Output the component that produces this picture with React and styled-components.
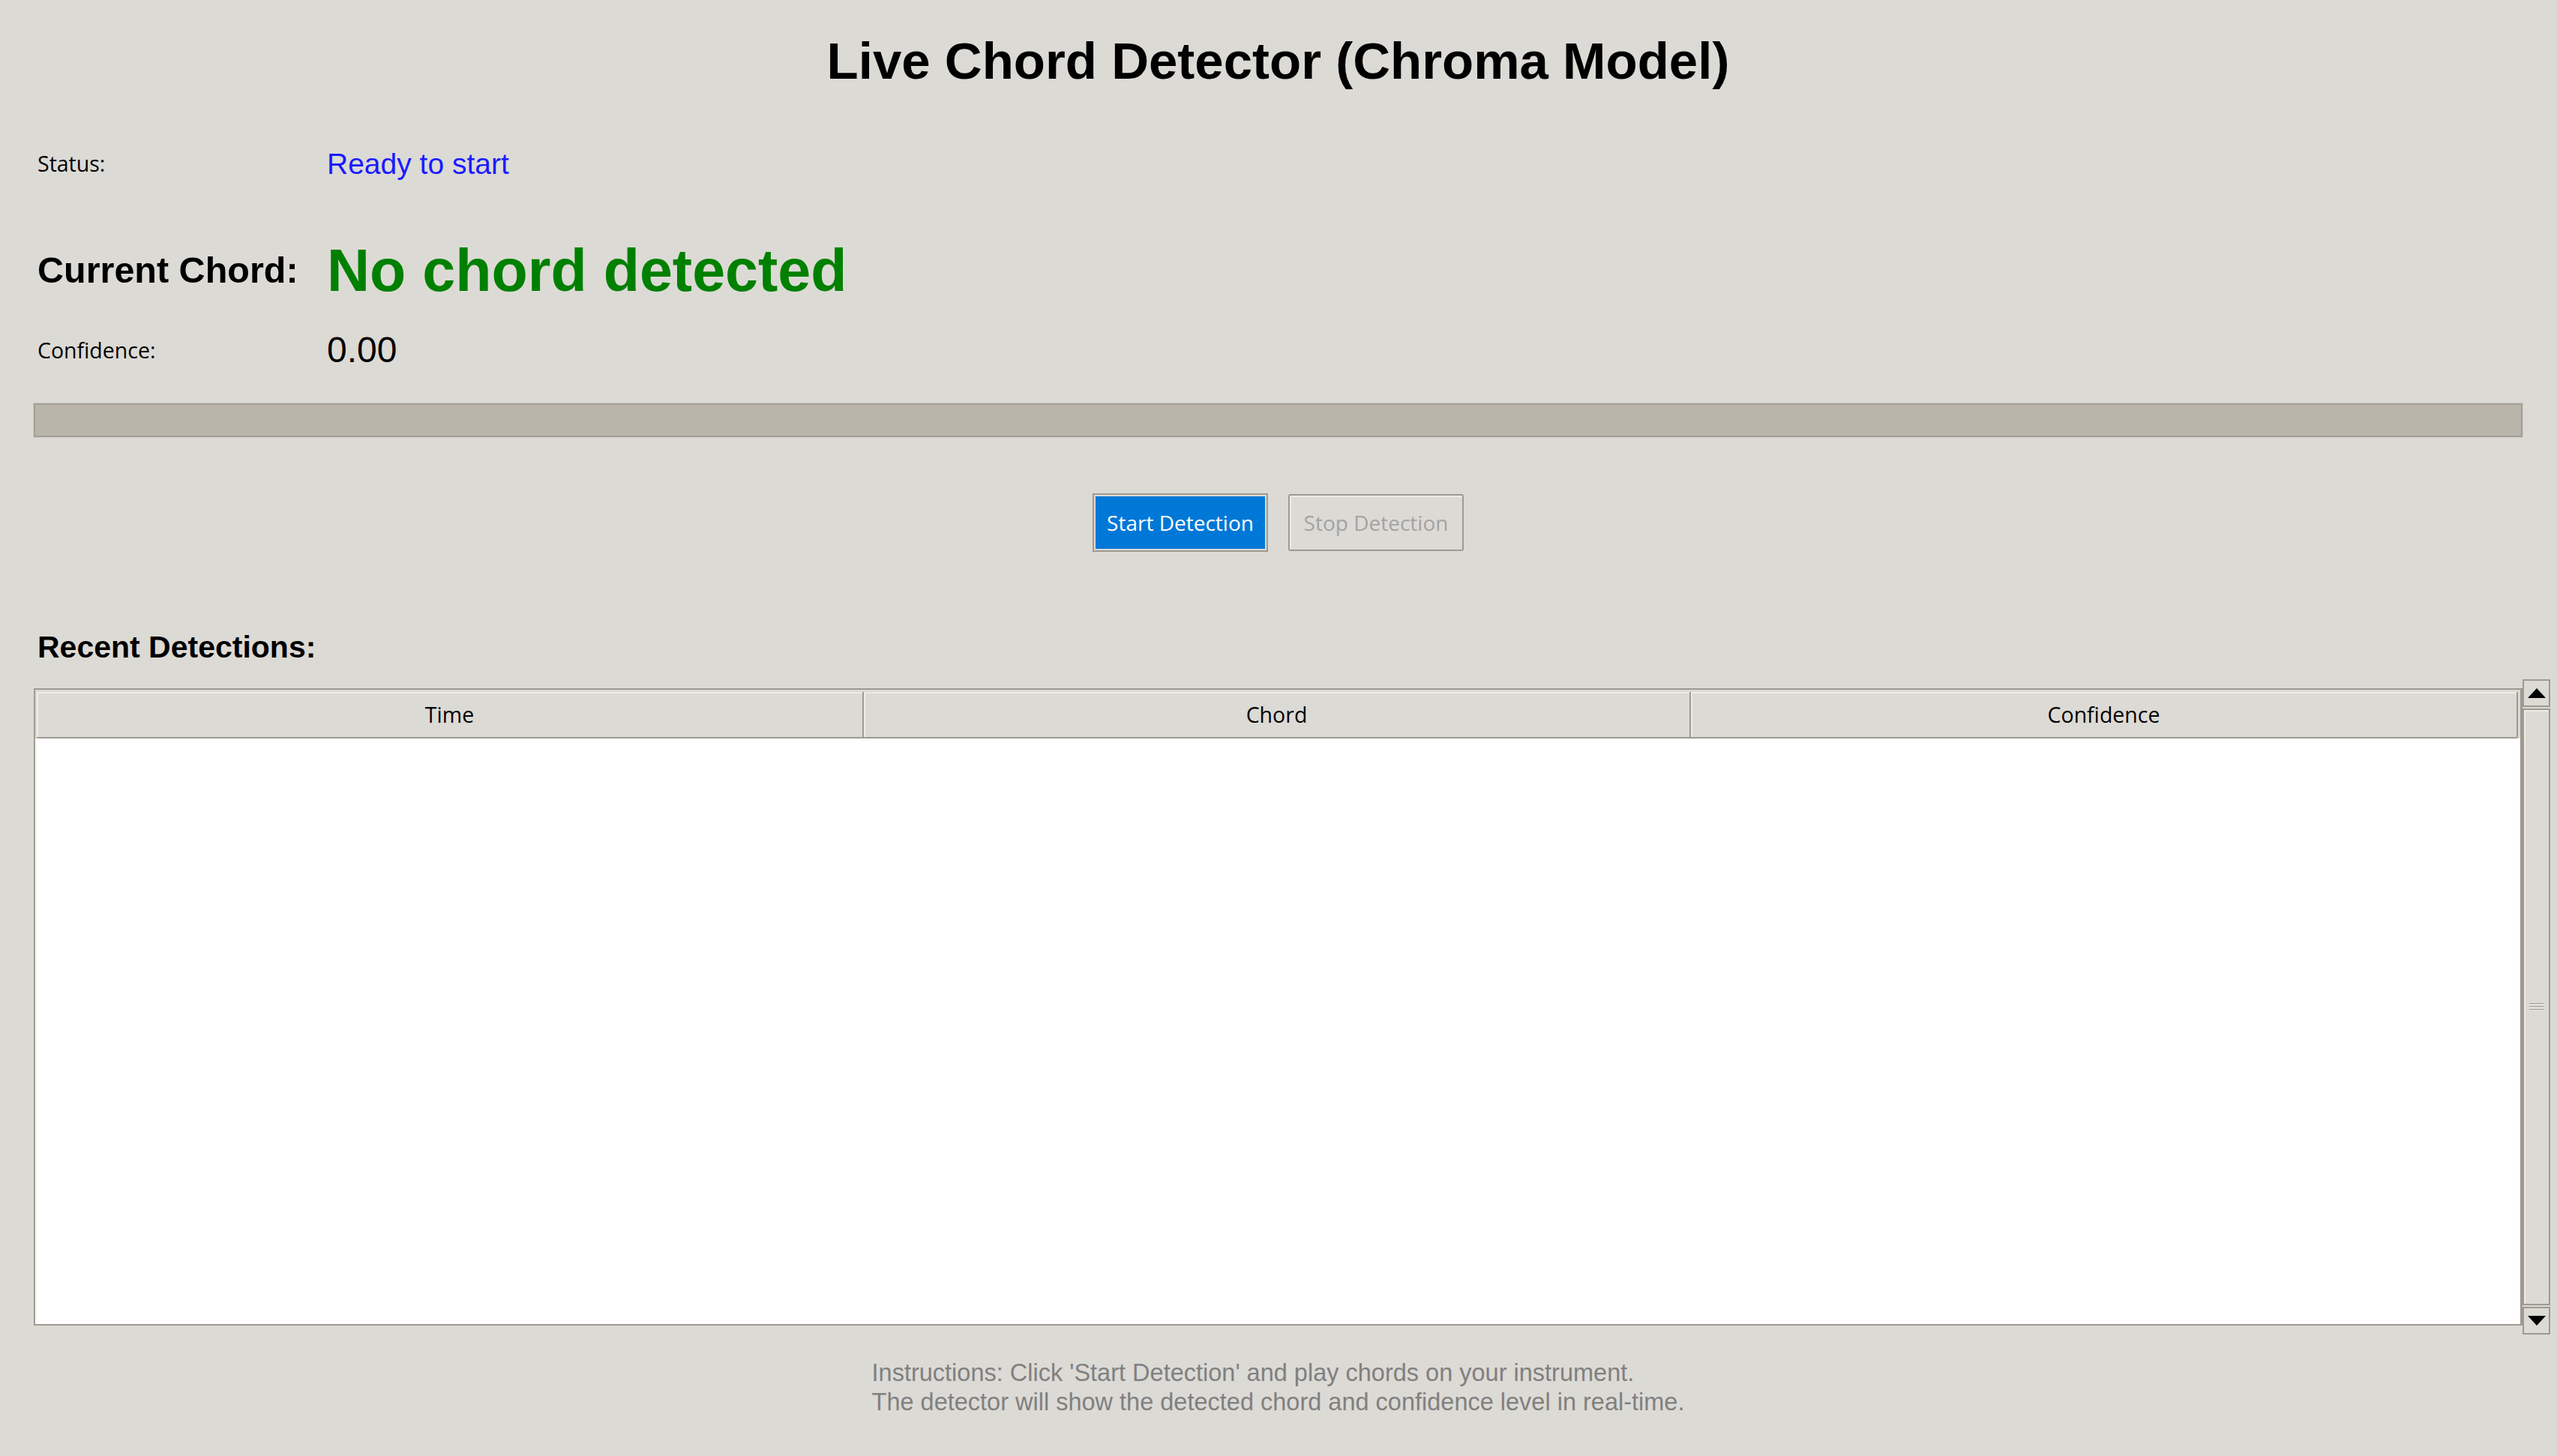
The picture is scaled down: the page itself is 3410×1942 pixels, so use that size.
import styled, { createGlobalStyle } from "styled-components";

const GlobalStyle = createGlobalStyle`
  html, body {
    margin: 0;
    padding: 0;
    background: #dcdad5;
  }
  body {
    font-family: "Liberation Sans", Arial, sans-serif;
  }
`;

const Window = styled.div`
  box-sizing: border-box;
  min-height: 1942px;
  padding: 0 46px 0 45px;
  display: flex;
  flex-direction: column;
  background: #dcdad5;
`;

const Title = styled.h1`
  margin: 47px 0 0;
  font: bold 69px/69px "Liberation Sans", Arial, sans-serif;
  text-align: center;
  color: #000;
`;

const Row = styled.div`
  display: flex;
  align-items: center;
  height: ${(p) => p.$h}px;
  margin-top: ${(p) => p.$top}px;
`;

const Label = styled.div`
  box-sizing: border-box;
  width: 391px;
  padding-left: 5px;
  font-family: ${(p) => (p.$big ? `"Liberation Sans", Arial` : `"Open Sans"`)}, sans-serif;
  font-size: ${(p) => (p.$big ? 48.5 : 28.5)}px;
  font-weight: ${(p) => (p.$big ? 700 : 400)};
  line-height: 1;
  color: #000;
`;

const Value = styled.div`
  font-family: "Liberation Sans", Arial, sans-serif;
  font-size: ${(p) => p.$size}px;
  font-weight: ${(p) => (p.$bold ? 700 : 400)};
  line-height: 1;
  color: ${(p) => p.$color || "#000"};
`;

const Progress = styled.div`
  box-sizing: border-box;
  margin-top: 47px;
  height: 45px;
  border: 2px solid #a29e96;
  background: #b9b5ab;
  box-shadow: 0 0 0 1px #cfccc6;
`;

const Buttons = styled.div`
  margin-top: 75px;
  display: flex;
  justify-content: center;
  align-items: center;
  gap: 27px;
`;

const Button = styled.button`
  box-sizing: border-box;
  width: 234px;
  height: ${(p) => (p.$primary ? 78 : 76)}px;
  padding: 0;
  font-family: "Open Sans", sans-serif;
  font-size: 28px;
  border: 2px solid #9e9a91;
  border-radius: ${(p) => (p.$primary ? 0 : 3)}px;
  background: ${(p) => (p.$primary ? "#0078d7" : "#dcdad5")};
  color: ${(p) => (p.$primary ? "#fff" : "#a3a3a3")};
  box-shadow: ${(p) =>
    p.$primary ? "inset 0 0 0 2px #dcdad5" : "inset 0 2px 0 #eeebe7, inset 2px 0 0 #eeebe7"};
`;

const Heading = styled.h2`
  margin: 107px 0 0;
  padding-left: 5px;
  font: bold 41px/41px "Liberation Sans", Arial, sans-serif;
  color: #000;
`;

const TableRow = styled.div`
  margin-top: 22px;
  margin-right: -37px;
  display: flex;
  align-items: flex-start;
`;

const Tree = styled.div`
  box-sizing: border-box;
  flex: 1;
  margin-top: 12px;
  height: 850px;
  border: 2px solid #9e9a91;
  border-right-width: 3px;
  background: #fff;
`;

const HeadWrap = styled.div`
  padding: 3px 3px 0 2px;
  background: #dcdad5;
`;

const HeadRow = styled.div`
  display: grid;
  grid-template-columns: repeat(3, 1fr);
`;

const HeadCell = styled.div`
  box-sizing: border-box;
  height: 62px;
  display: flex;
  align-items: center;
  justify-content: center;
  font-family: "Open Sans", sans-serif;
  font-size: 28.5px;
  color: #000;
  background: #dcdad5;
  border-right: 2px solid #9e9a91;
  border-bottom: 2px solid #9e9a91;
  border-radius: ${(p) => (p.$last ? "0 0 3px 0" : "0")};
  box-shadow: inset 0 2px 0 #eeebe7, inset 2px 0 0 #eeebe7;
`;

const ScrollBar = styled.div`
  box-sizing: border-box;
  width: 37px;
  height: 874px;
  display: flex;
  flex-direction: column;
  gap: 2px;
`;

const Arrow = styled.div`
  box-sizing: border-box;
  height: 37px;
  border: 2px solid #9e9a91;
  background: #dcdad5;
  display: flex;
  align-items: center;
  justify-content: center;
`;

const Thumb = styled.div`
  box-sizing: border-box;
  flex: 1;
  border: 2px solid #9e9a91;
  background: #dcdad5;
  box-shadow: inset 0 2px 0 #eeebe7, inset 2px 0 0 #eeebe7;
  display: flex;
  align-items: center;
  justify-content: center;
`;

const Grip = styled.div`
  width: 19px;
  height: 11px;
  background: repeating-linear-gradient(
    to bottom,
    #9e9a91 0 1px,
    #eeebe7 1px 2px,
    transparent 2px 4px
  );
`;

const Instructions = styled.div`
  margin-top: 32px;
  display: flex;
  justify-content: center;
`;

const InstructionText = styled.p`
  margin: 0;
  font: 32.5px/39px "Liberation Sans", Arial, sans-serif;
  color: #808080;
  white-space: pre-line;
  text-align: left;
`;

const Triangle = ({ up }) => (
  <svg width="24" height="13" viewBox="0 0 24 13">
    <polygon points={up ? "12,0 24,13 0,13" : "0,0 24,0 12,13"} fill="#000" />
  </svg>
);

const App = () => {
  return (
    <>
      <GlobalStyle />
      <Window>
        <Title>Live Chord Detector (Chroma Model)</Title>

        <Row $h={40} $top={82}>
          <Label>Status:</Label>
          <Value $size={39} $color="#1a1aff">Ready to start</Value>
        </Row>
        <Row $h={80} $top={82}>
          <Label $big>Current Chord:</Label>
          <Value $size={79} $bold $color="#008000">No chord detected</Value>
        </Row>
        <Row $h={48} $top={43}>
          <Label>Confidence:</Label>
          <Value $size={48}>0.00</Value>
        </Row>

        <Progress />

        <Buttons>
          <Button $primary>Start Detection</Button>
          <Button disabled>Stop Detection</Button>
        </Buttons>

        <Heading>Recent Detections:</Heading>

        <TableRow>
          <Tree>
            <HeadWrap>
              <HeadRow>
                <HeadCell>Time</HeadCell>
                <HeadCell>Chord</HeadCell>
                <HeadCell $last>Confidence</HeadCell>
              </HeadRow>
            </HeadWrap>
          </Tree>
          <ScrollBar>
            <Arrow><Triangle up /></Arrow>
            <Thumb><Grip /></Thumb>
            <Arrow><Triangle /></Arrow>
          </ScrollBar>
        </TableRow>

        <Instructions>
          <InstructionText>
            {"Instructions: Click 'Start Detection' and play chords on your instrument.\nThe detector will show the detected chord and confidence level in real-time."}
          </InstructionText>
        </Instructions>
      </Window>
    </>
  );
};

export default App;
